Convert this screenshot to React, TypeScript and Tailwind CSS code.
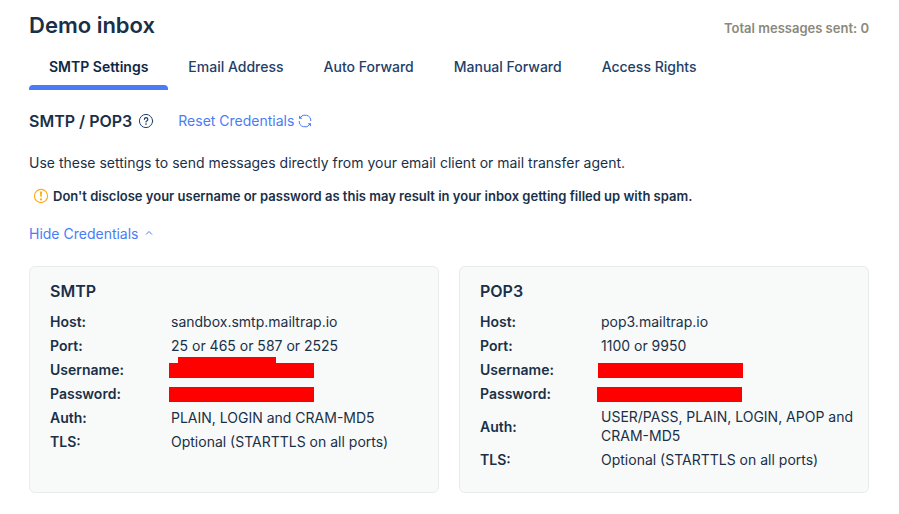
import React, { useState } from "react";
import clsx from "clsx";

interface Row {
  label: string;
  value: React.ReactNode;
}

const TABS = [
  "SMTP Settings",
  "Email Address",
  "Auto Forward",
  "Manual Forward",
  "Access Rights",
];

function Redacted({ className }: { className?: string }) {
  return <span className={clsx("mt-[2px] block h-[15px] w-[145px] bg-[#ff0000]", className)} />;
}

const SMTP_ROWS: Row[] = [
  { label: "Host", value: "sandbox.smtp.mailtrap.io" },
  { label: "Port", value: "25 or 465 or 587 or 2525" },
  {
    label: "Username",
    value: (
      <div className="relative">
        <span className="absolute -top-[6px] left-[7px] h-[6px] w-[98px] bg-[#ff0000]" />
        <Redacted className="-ml-[2px]" />
      </div>
    ),
  },
  { label: "Password", value: <Redacted className="-ml-[2px]" /> },
  { label: "Auth", value: "PLAIN, LOGIN and CRAM-MD5" },
  { label: "TLS", value: "Optional (STARTTLS on all ports)" },
];

const POP3_ROWS: Row[] = [
  { label: "Host", value: "pop3.mailtrap.io" },
  { label: "Port", value: "1100 or 9950" },
  { label: "Username", value: <Redacted className="-ml-[3px]" /> },
  { label: "Password", value: <Redacted className="-ml-[4px]" /> },
  { label: "Auth", value: "USER/PASS, PLAIN, LOGIN, APOP and CRAM-MD5" },
  { label: "TLS", value: "Optional (STARTTLS on all ports)" },
];

function HelpIcon() {
  return (
    <svg width="16" height="16" viewBox="0 0 16 16" fill="none" stroke="#1f4068" strokeLinecap="round">
      <circle cx="8" cy="8" r="6.6" strokeWidth="1" />
      <path d="M6.4 6.3a1.7 1.7 0 1 1 2.6 1.5c-.7.4-1 .7-1 1.2" strokeWidth="1.2" />
      <circle cx="8" cy="11.1" r=".8" fill="#1f4068" stroke="none" />
    </svg>
  );
}

function RefreshIcon() {
  return (
    <svg width="14" height="14" viewBox="0 0 14 14" fill="none" stroke="#4a7cf6">
      <path d="M2.2 3.6A5.8 5.8 0 0 1 12.8 7M1.2 7a5.8 5.8 0 0 0 10.6 3.4" strokeWidth="1" />
      <path d="M1 1.6v3.2h3.4zM13 12.4V9.2H9.6z" fill="#4a7cf6" stroke="none" />
    </svg>
  );
}

function WarningIcon() {
  return (
    <svg width="16" height="16" viewBox="0 0 16 16" fill="none" className="shrink-0">
      <circle cx="8" cy="8" r="6.6" stroke="#fcab10" strokeWidth="1.1" />
      <path d="M7 3.4h2l-.3 5.4H7.3z" fill="#fcab10" />
      <circle cx="8" cy="11.4" r="1.1" fill="#fcab10" />
    </svg>
  );
}

function CredentialsCard({ title, rows }: { title: string; rows: Row[] }) {
  return (
    <section className="rounded-md border border-[#e9ecec] bg-[#f8faf9] pt-3 pr-3 pb-[21px] pl-5">
      <h3 className="text-base leading-6 font-semibold">{title}</h3>
      <table className="mt-[6px] w-full text-sm leading-[19px]">
        <tbody>
          {rows.map((row) => (
            <tr key={row.label} className="h-6">
              <th scope="row" className="w-[121px] text-left align-middle font-semibold">
                {row.label}:
              </th>
              <td className="py-[2px] align-middle">{row.value}</td>
            </tr>
          ))}
        </tbody>
      </table>
    </section>
  );
}

function App() {
  const [activeTab, setActiveTab] = useState(TABS[0]);
  const [showCredentials, setShowCredentials] = useState(true);

  return (
    <main className="bg-white pt-[9px] pr-[30px] pb-5 pl-[29px] font-['Inter',sans-serif] text-sm text-[#1a3048]">
      <header className="flex items-center justify-between">
        <h1 className="text-[22px] leading-8 font-semibold">Demo inbox</h1>
        <p className="pt-[6px] text-[13px] leading-5 font-semibold text-[#8a8a7c]">
          Total messages sent: 0
        </p>
      </header>

      {/* Tabs */}
      <nav className="mt-[15px] flex">
        {TABS.map((tab) => (
          <button
            key={tab}
            onClick={() => setActiveTab(tab)}
            className={clsx(
              "flex flex-col font-medium",
              tab === activeTab ? "font-semibold text-[#0f2743]" : "text-[#1f4068]"
            )}
          >
            <span className="px-5 pb-2 leading-[21px]">{tab}</span>
            <span
              className={clsx(
                "h-[5px] w-full rounded-t-[4px]",
                tab === activeTab && "bg-[#4a7cf6]"
              )}
            />
          </button>
        ))}
      </nav>

      <div className="mt-[19px] flex items-center">
        <h2 className="text-base leading-6 font-semibold">SMTP / POP3</h2>
        <button aria-label="Help" className="ml-[6px]">
          <HelpIcon />
        </button>
        <button className="ml-6 flex items-center gap-1 text-[#4a7cf6]">
          Reset Credentials
          <RefreshIcon />
        </button>
      </div>

      <p className="mt-5 leading-5">
        Use these settings to send messages directly from your email client or mail transfer agent.
      </p>

      <p className="mt-[13px] flex items-center gap-1 pl-1 text-[13px] leading-5 font-semibold">
        <WarningIcon />
        Don't disclose your username or password as this may result in your inbox getting filled up
        with spam.
      </p>

      <button
        onClick={() => setShowCredentials(!showCredentials)}
        className="mt-[18px] flex items-center gap-[6px] leading-5 text-[#4a7cf6]"
      >
        Hide Credentials
        <svg width="8" height="8" viewBox="0 0 8 8" fill="none" stroke="#4a7cf6">
          <path d="M1 4.5 4 1.5l3 3" />
        </svg>
      </button>

      {showCredentials && (
        <div className="mt-[22px] grid grid-cols-2 gap-5">
          <CredentialsCard title="SMTP" rows={SMTP_ROWS} />
          <CredentialsCard title="POP3" rows={POP3_ROWS} />
        </div>
      )}
    </main>
  );
}

export default App;
